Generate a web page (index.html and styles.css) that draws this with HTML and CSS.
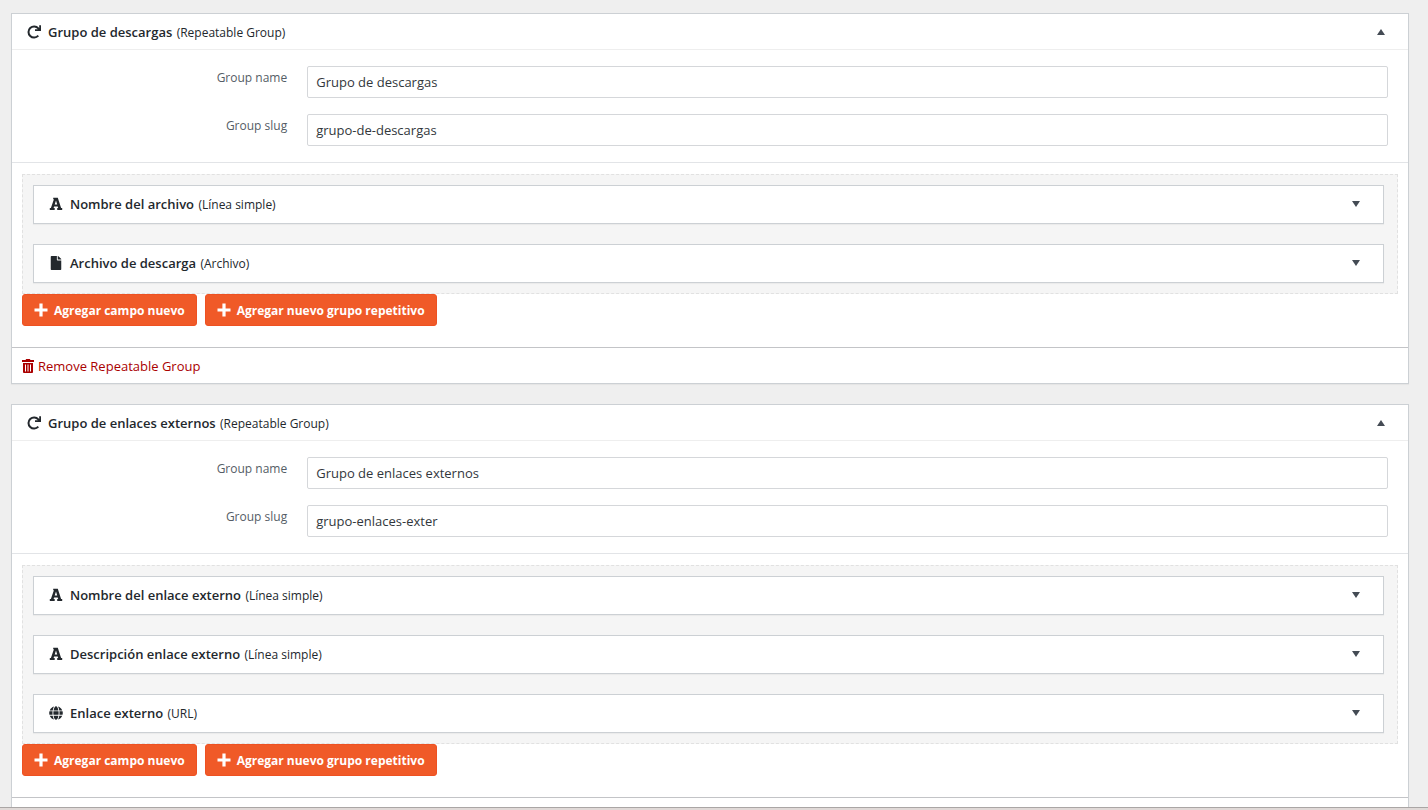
FILE: index.html
```html
<!DOCTYPE html>
<html lang="es">

<head>
    <meta charset="utf-8" />
    <title>Grupos de campos</title>
    <link rel="stylesheet" href="styles.css">
</head>

<body>
    <!-- icon set, used below with <use> -->
    <svg class="sprite" aria-hidden="true">
        <symbol id="i-redo" viewBox="0 0 14 14">
            <path d="M11.300 10.700A5.600 5.600 0 1 1 11.300 3.300L12.400 4.600" fill="none" stroke="currentColor" stroke-width="2" />
            <path d="M12.200 0.200H14V6H8V4.200H10.600L12.200 3z" />
        </symbol>
        <symbol id="i-font" viewBox="0 0 14 14">
            <path d="M4.200 0.800H8.800L12.100 11H13.200V13H8.200V11H9.200L8.700 9.400H5.100L4.600 11H5.700V13H0.800V11H1.900L4.900 2.200H4.200zM5.700 7.500H8.200L7 3.600z" fill-rule="evenodd" />
        </symbol>
        <symbol id="i-file" viewBox="0 0 384 512">
            <path d="M224 136V0H24C10.700 0 0 10.700 0 24v464c0 13.300 10.700 24 24 24h336c13.300 0 24-10.700 24-24V160H248c-13.200 0-24-10.800-24-24zm160-14.100v6.100H256V0h6.100c6.400 0 12.500 2.500 17 7l97.900 98c4.500 4.500 7 10.600 7 16.900z" />
        </symbol>
        <symbol id="i-globe" viewBox="0 0 496 512">
            <path d="M336.500 160C322 70.700 287.800 8 248 8s-74 62.700-88.500 152h177zM152 256c0 22.200 1.200 43.500 3.300 64h185.300c2.100-20.500 3.300-41.800 3.300-64s-1.200-43.500-3.300-64H155.300c-2.100 20.500-3.300 41.800-3.300 64zm324.700-96c-28.600-67.900-86.500-120.400-158-141.600 24.400 33.800 41.200 84.700 50 141.600h108zM177.200 18.400C105.800 39.600 47.800 92.100 19.300 160h108c8.700-56.900 25.500-107.800 49.900-141.600zM487.400 192H372.700c2.100 21 3.300 42.500 3.300 64s-1.200 43-3.300 64h114.600c5.500-20.500 8.600-41.800 8.600-64s-3.100-43.500-8.500-64zM120 256c0-21.500 1.200-43 3.300-64H8.600C3.200 212.500 0 233.800 0 256s3.200 43.500 8.600 64h114.600c-2-21-3.200-42.500-3.200-64zm39.500 96c14.500 89.300 48.700 152 88.500 152s74-62.700 88.500-152h-177zm159.300 141.600c71.400-21.200 129.400-73.700 158-141.600h-108c-8.800 56.900-25.600 107.800-50 141.600zM19.300 352c28.600 67.900 86.500 120.400 158 141.600-24.400-33.800-41.200-84.700-50-141.600h-108z" />
        </symbol>
        <symbol id="i-plus" viewBox="0 0 14 14">
            <path d="M5.400 0.500H8.600V5.400H13.500V8.600H8.600V13.500H5.400V8.600H0.500V5.400H5.400z" />
        </symbol>
        <symbol id="i-trash" viewBox="0 0 12 14">
            <path d="M0 1H3.500L4.200 0H7.800L8.500 1H12V3H0zM1 4H11V13.200Q11 14 10 14H2Q1 14 1 13.200zM3 5.500V12.500H4V5.500zM5.500 5.500V12.500H6.500V5.500zM8 5.500V12.500H9V5.500z" fill-rule="evenodd" />
        </symbol>
        <symbol id="i-up" viewBox="0 0 8 6">
            <path d="M0 6L4 0L8 6z" />
        </symbol>
        <symbol id="i-down" viewBox="0 0 8 6">
            <path d="M0 0H8L4 6z" />
        </symbol>
    </svg>

    <main>
        <section class="group">
            <header class="group-head">
                <svg class="icon"><use href="#i-redo" /></svg>
                <h2>Grupo de descargas <span>(Repeatable Group)</span></h2>
                <button class="toggle" type="button" aria-label="Contraer"><svg><use href="#i-up" /></svg></button>
            </header>
            <div class="settings">
                <div class="row">
                    <label for="name-1">Group name</label>
                    <input type="text" id="name-1" value="Grupo de descargas">
                </div>
                <div class="row">
                    <label for="slug-1">Group slug</label>
                    <input type="text" id="slug-1" value="grupo-de-descargas">
                </div>
            </div>
            <div class="content">
                <div class="fields">
                    <div class="field">
                        <svg class="icon"><use href="#i-font" /></svg>
                        <h3>Nombre del archivo <span>(Línea simple)</span></h3>
                        <button class="toggle" type="button" aria-label="Expandir"><svg><use href="#i-down" /></svg></button>
                    </div>
                    <div class="field">
                        <svg class="icon"><use href="#i-file" /></svg>
                        <h3>Archivo de descarga <span>(Archivo)</span></h3>
                        <button class="toggle" type="button" aria-label="Expandir"><svg><use href="#i-down" /></svg></button>
                    </div>
                </div>
                <div class="actions">
                    <button class="add" type="button"><svg><use href="#i-plus" /></svg>Agregar campo nuevo</button>
                    <button class="add" type="button"><svg><use href="#i-plus" /></svg>Agregar nuevo grupo repetitivo</button>
                </div>
            </div>
            <footer class="group-foot">
                <a href="#"><svg><use href="#i-trash" /></svg>Remove Repeatable Group</a>
            </footer>
        </section>

        <section class="group">
            <header class="group-head">
                <svg class="icon"><use href="#i-redo" /></svg>
                <h2>Grupo de enlaces externos <span>(Repeatable Group)</span></h2>
                <button class="toggle" type="button" aria-label="Contraer"><svg><use href="#i-up" /></svg></button>
            </header>
            <div class="settings">
                <div class="row">
                    <label for="name-2">Group name</label>
                    <input type="text" id="name-2" value="Grupo de enlaces externos">
                </div>
                <div class="row">
                    <label for="slug-2">Group slug</label>
                    <input type="text" id="slug-2" value="grupo-enlaces-exter">
                </div>
            </div>
            <div class="content">
                <div class="fields">
                    <div class="field">
                        <svg class="icon"><use href="#i-font" /></svg>
                        <h3>Nombre del enlace externo <span>(Línea simple)</span></h3>
                        <button class="toggle" type="button" aria-label="Expandir"><svg><use href="#i-down" /></svg></button>
                    </div>
                    <div class="field">
                        <svg class="icon"><use href="#i-font" /></svg>
                        <h3>Descripción enlace externo <span>(Línea simple)</span></h3>
                        <button class="toggle" type="button" aria-label="Expandir"><svg><use href="#i-down" /></svg></button>
                    </div>
                    <div class="field">
                        <svg class="icon"><use href="#i-globe" /></svg>
                        <h3>Enlace externo <span>(URL)</span></h3>
                        <button class="toggle" type="button" aria-label="Expandir"><svg><use href="#i-down" /></svg></button>
                    </div>
                </div>
                <div class="actions">
                    <button class="add" type="button"><svg><use href="#i-plus" /></svg>Agregar campo nuevo</button>
                    <button class="add" type="button"><svg><use href="#i-plus" /></svg>Agregar nuevo grupo repetitivo</button>
                </div>
            </div>
            <footer class="group-foot"></footer>
        </section>
    </main>
    <div class="window-edge"></div>
</body>

</html>
```

FILE: styles.css
```css
* {
    box-sizing: border-box;
    padding: 0;
    margin: 0;
}

body {
    display: flex;
    flex-direction: column;
    height: 100vh;
    overflow: hidden;
    background: #efefef;
    color: #23282d;
    font-family: "Segoe UI", "Open Sans", "Noto Sans", sans-serif;
    font-size: 13px;
}

main {
    flex: 1;
    min-height: 0;
    overflow: hidden;
    padding: 13px 19px 0 11px;
}

svg {
    display: block;
    fill: currentColor;
}

.sprite {
    display: none;
}

.group {
    margin-bottom: 20px;
    border: 1px solid #ccd0d4;
    background: #fff;
    box-shadow: 0 1px 1px rgba(0, 0, 0, 0.04);
}

.group-head,
.field {
    display: flex;
    align-items: center;
    gap: 7px;
}

.group-head {
    height: 36px;
    padding: 0 15px;
    border-bottom: 1px solid #eee;
}

h2,
h3 {
    flex: 1;
    font-size: 13px;
    font-weight: 600;
}

h2 span,
h3 span {
    margin-left: 1px;
    font-size: 12px;
    font-weight: 400;
}

.icon {
    width: 14px;
    height: 14px;
}

.toggle {
    width: 24px;
    height: 24px;
    border: 0;
    background: none;
    color: #444b54;
    cursor: pointer;
}

.toggle svg {
    width: 8px;
    height: 6px;
    margin: auto;
}

.settings {
    display: grid;
    gap: 16px;
    padding: 16px 20px 16px 0;
    border-bottom: 1px solid #e2e4e7;
}

.row {
    display: flex;
    gap: 20px;
}

.row label {
    width: 20%;
    padding-top: 3px;
    font-size: 12px;
    line-height: 18px;
    text-align: right;
    color: #555d66;
}

.row input {
    flex: 1;
    height: 32px;
    padding: 0 8px;
    border: 1px solid #d5d7da;
    border-radius: 2px;
    background: #fff;
    color: #32373c;
    font-family: inherit;
    font-size: 13px;
}

.content {
    padding: 11px 10px 21px;
    border-bottom: 1px solid #c3c4c7;
}

.fields {
    display: grid;
    gap: 20px;
    padding: 10px 13px 10px 10px;
    border: 1px dashed #e1e1e1;
    background: #f5f5f5;
}

.field {
    height: 39px;
    padding: 0 15px 1px;
    border: 1px solid #ccd0d4;
    background: #fff;
    box-shadow: 0 1px 1px rgba(0, 0, 0, 0.04);
}

.actions {
    display: flex;
    gap: 8px;
}

.add {
    display: flex;
    align-items: center;
    gap: 6px;
    height: 32px;
    padding: 0 11px;
    border: 1px solid #ee5122;
    border-radius: 3px;
    background: #f05a28;
    color: #fff;
    font-family: inherit;
    font-size: 12px;
    font-weight: 700;
    cursor: pointer;
}

.add svg {
    width: 14px;
    height: 14px;
}

.group-foot {
    height: 35px;
    padding: 0 10px;
}

.group-foot a {
    display: inline-flex;
    align-items: center;
    gap: 4px;
    height: 35px;
    color: #a00;
    text-decoration: none;
}

.group-foot svg {
    width: 12px;
    height: 14px;
}

.window-edge {
    height: 3px;
    border-top: 1px solid #aaa6a5;
    background: #e0d9d7;
}
```
